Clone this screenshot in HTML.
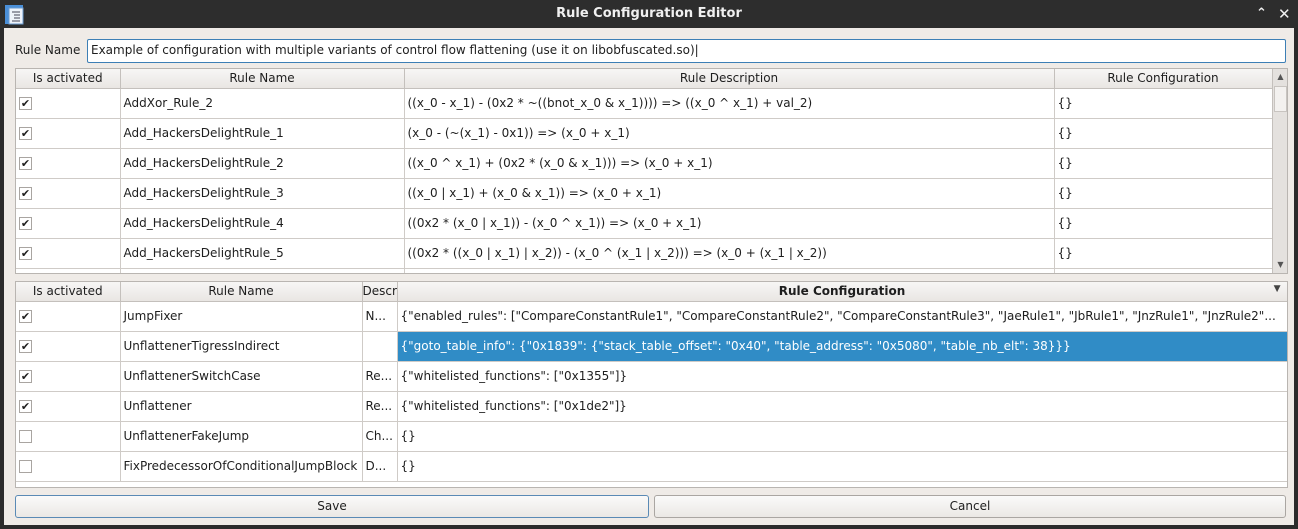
<!DOCTYPE html>
<html><head><style>
*{box-sizing:border-box;margin:0;padding:0}
body{width:1298px;height:529px;overflow:hidden;background:#2b2b2b;font-family:"DejaVu Sans","Liberation Sans",sans-serif;font-size:12px;color:#1e1e1e;position:relative}
.title{position:absolute;left:0;top:0;width:1298px;height:28px;background:#2d2d2d;color:#f0f0f0;font-weight:bold;font-size:13px;text-align:center;line-height:28px}
.win{position:absolute;left:4px;top:28px;width:1290px;height:497px;background:#efebe7}
.abs{position:absolute}
.box{position:absolute;background:#fff;border:1px solid #b9b5b1;overflow:hidden}
table{border-collapse:collapse;table-layout:fixed;position:absolute;left:0;top:0}
th{height:19px;font-weight:normal;background:linear-gradient(#f7f6f5,#e9e6e3);border-right:1px solid #c4c0bc;border-bottom:1px solid #c4c0bc;text-align:center;white-space:nowrap;overflow:hidden;padding:0}
td{height:30px;border-right:1px solid #cfcbc7;border-bottom:1px solid #cfcbc7;padding:0 0 0 3px;white-space:nowrap;overflow:hidden}
.cb{display:inline-block;width:13px;height:13px;border:1px solid #a9a5a1;background:#fff;vertical-align:middle;font-size:11px;line-height:11px;text-align:center;font-weight:bold}
.sel{background:#308cc6;color:#fff}
.btn{position:absolute;top:467px;height:23px;border:1px solid #aaa6a2;border-radius:3px;background:linear-gradient(#fafafa,#ebe8e5);text-align:center;line-height:21px}
</style></head><body>
<div class="title">Rule Configuration Editor
<svg class="abs" style="left:4px;top:4px" width="22" height="22"><rect x="1" y="1" width="18" height="19" fill="#4a8fd8"/><rect x="5" y="4" width="14" height="16" fill="#eef3fa" stroke="#6a9bd0"/><path d="M8 8h8M10 11h6M10 14h6M8 17h8" stroke="#445" stroke-width="1"/></svg>
<span class="abs" style="left:1256px;top:0;font-size:13px">&#8963;</span>
<span class="abs" style="left:1278px;top:0;font-size:15px">✕</span>
</div>
<div class="win">
<div class="abs" style="left:11px;top:15px">Rule Name</div>
<div class="abs" style="left:83px;top:11px;width:1199px;height:24px;background:#fff;border:1px solid #3d7fb5;border-radius:2px;padding-left:3px;line-height:21px">Example of configuration with multiple variants of control flow flattening (use it on libobfuscated.so)|</div>

<div class="box" style="left:11px;top:40px;width:1273px;height:206px">
<table style="width:1256px">
<col style="width:104px"><col style="width:284px"><col style="width:650px"><col style="width:218px">
<tr><th>Is activated</th><th>Rule Name</th><th>Rule Description</th><th>Rule Configuration</th></tr>
<tr><td><span class="cb">✔</span></td><td>AddXor_Rule_2</td><td>((x_0 - x_1) - (0x2 * ~((bnot_x_0 &amp; x_1)))) =&gt; ((x_0 ^ x_1) + val_2)</td><td>{}</td></tr>
<tr><td><span class="cb">✔</span></td><td>Add_HackersDelightRule_1</td><td>(x_0 - (~(x_1) - 0x1)) =&gt; (x_0 + x_1)</td><td>{}</td></tr>
<tr><td><span class="cb">✔</span></td><td>Add_HackersDelightRule_2</td><td>((x_0 ^ x_1) + (0x2 * (x_0 &amp; x_1))) =&gt; (x_0 + x_1)</td><td>{}</td></tr>
<tr><td><span class="cb">✔</span></td><td>Add_HackersDelightRule_3</td><td>((x_0 | x_1) + (x_0 &amp; x_1)) =&gt; (x_0 + x_1)</td><td>{}</td></tr>
<tr><td><span class="cb">✔</span></td><td>Add_HackersDelightRule_4</td><td>((0x2 * (x_0 | x_1)) - (x_0 ^ x_1)) =&gt; (x_0 + x_1)</td><td>{}</td></tr>
<tr><td><span class="cb">✔</span></td><td>Add_HackersDelightRule_5</td><td>((0x2 * ((x_0 | x_1) | x_2)) - (x_0 ^ (x_1 | x_2))) =&gt; (x_0 + (x_1 | x_2))</td><td>{}</td></tr>
<tr><td></td><td></td><td></td><td></td></tr>
</table>
<div class="abs" style="left:1256px;top:0;width:16px;height:204px;background:#e4e1de;border-left:1px solid #c4c0bc">
<div class="abs" style="left:0;top:0;width:15px;height:16px;font-size:8px;text-align:center;line-height:16px;color:#555">▲</div>
<div class="abs" style="left:1px;top:17px;width:13px;height:26px;background:#f3f1ef;border:1px solid #c8c4c0"></div>
<div class="abs" style="left:0;top:188px;width:15px;height:16px;font-size:8px;text-align:center;line-height:16px;color:#555">▼</div>
</div>
</div>

<div class="box" style="left:11px;top:253px;width:1273px;height:207px">
<table style="width:1271px">
<col style="width:104px"><col style="width:242px"><col style="width:35px"><col style="width:890px">
<tr><th>Is activated</th><th>Rule Name</th><th style="text-align:left">Descr</th><th style="font-weight:bold;position:relative">Rule Configuration<span style="position:absolute;right:6px;top:2px;font-size:9px;color:#444">▼</span></th></tr>
<tr><td><span class="cb">✔</span></td><td>JumpFixer</td><td>N...</td><td>{"enabled_rules": ["CompareConstantRule1", "CompareConstantRule2", "CompareConstantRule3", "JaeRule1", "JbRule1", "JnzRule1", "JnzRule2"...</td></tr>
<tr><td><span class="cb">✔</span></td><td>UnflattenerTigressIndirect</td><td></td><td class="sel">{"goto_table_info": {"0x1839": {"stack_table_offset": "0x40", "table_address": "0x5080", "table_nb_elt": 38}}}</td></tr>
<tr><td><span class="cb">✔</span></td><td>UnflattenerSwitchCase</td><td>Re...</td><td>{"whitelisted_functions": ["0x1355"]}</td></tr>
<tr><td><span class="cb">✔</span></td><td>Unflattener</td><td>Re...</td><td>{"whitelisted_functions": ["0x1de2"]}</td></tr>
<tr><td><span class="cb"></span></td><td>UnflattenerFakeJump</td><td>Ch...</td><td>{}</td></tr>
<tr><td><span class="cb"></span></td><td>FixPredecessorOfConditionalJumpBlock</td><td>D...</td><td>{}</td></tr>
</table>
</div>

<div class="btn" style="left:11px;width:634px;border-color:#5a8ab5">Save</div>
<div class="btn" style="left:650px;width:632px">Cancel</div>
</div>
</body></html>
